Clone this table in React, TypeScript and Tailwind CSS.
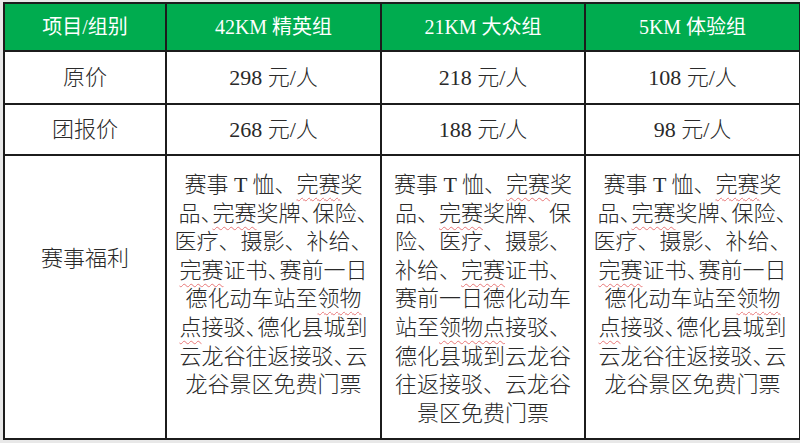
const FONT = "font-['Liberation_Serif','Noto_Sans_CJK_SC',serif]"

type Cell = { lines: string[]; squeeze?: number[] }

// [..] marks text with a spell-check squiggle
function Line({ text, squeeze }: { text: string; squeeze?: boolean }) {
  const parts = text.split(/(\[[^\]]+\])/).filter(Boolean)
  return (
    <div className="whitespace-nowrap">
      {parts.map((p, i) => {
        const marked = p.startsWith("[")
        const body = marked ? p.slice(1, -1) : p
        const chars = squeeze
          ? body.split(/(、)/).map((c, j) =>
              c === "、" ? (
                <span key={j} className="tracking-[-10px]">
                  、
                </span>
              ) : (
                c
              )
            )
          : body
        return marked ? (
          <span
            key={i}
            className="underline decoration-wavy decoration-[#e87878] decoration-1 underline-offset-[5px]"
          >
            {chars}
          </span>
        ) : (
          <span key={i}>{chars}</span>
        )
      })}
    </div>
  )
}

const wide: Cell = {
  lines: [
    "赛事 T 恤、[完赛]奖",
    "品、[完赛]奖牌、保险、",
    "医疗、摄影、补给、",
    "[完赛]证书、赛前一日",
    "德化动车站至[领物]",
    "[点]接驳、德化县城到",
    "云龙谷往返接驳、云",
    "龙谷景区免费门票",
  ],
  squeeze: [1, 3, 5, 6],
}

const narrow: Cell = {
  lines: [
    "赛事 T 恤、[完赛]奖",
    "品、[完赛]奖牌、保",
    "险、医疗、摄影、",
    "补给、[完赛]证书、",
    "赛前一日德化动车",
    "站至[领物点]接驳、",
    "德化县城到云龙谷",
    "往返接驳、云龙谷",
    "景区免费门票",
  ],
}

function Perks({ cell }: { cell: Cell }) {
  return (
    <td className="border-2 border-[#1c1c1c] align-top pt-[15px] text-center leading-[28.6px]">
      {cell.lines.map((l, i) => (
        <Line key={i} text={l} squeeze={cell.squeeze?.includes(i)} />
      ))}
    </td>
  )
}

export default function App() {
  const th = "border-2 border-[#1c1c1c] text-center text-[20px] font-normal text-white"
  const td = "border-2 border-[#1c1c1c] text-center text-[22px]"
  return (
    <div className={`h-[443px] w-[800px] bg-[#e8e8e8] pl-[3px] pt-[2px] ${FONT}`}>
      <table className="border-collapse bg-white text-[#2a2a2a] text-[22px] font-light table-fixed w-[796px]">
        <colgroup>
          <col className="w-[162px]" />
          <col className="w-[215px]" />
          <col className="w-[204px]" />
          <col className="w-[215px]" />
        </colgroup>
        <thead>
          <tr className="h-[48px] bg-[#00ac4f]">
            <th className={th}>项目/组别</th>
            <th className={th}>42KM 精英组</th>
            <th className={th}>21KM 大众组</th>
            <th className={th}>5KM 体验组</th>
          </tr>
        </thead>
        <tbody>
          <tr className="h-[53px]">
            <td className={td}>原价</td>
            <td className={td}>298 元/人</td>
            <td className={td}>218 元/人</td>
            <td className={td}>108 元/人</td>
          </tr>
          <tr className="h-[51px]">
            <td className={td}>团报价</td>
            <td className={td}>268 元/人</td>
            <td className={td}>188 元/人</td>
            <td className={td}>98 元/人</td>
          </tr>
          <tr className="h-[284px]">
            <td className="border-2 border-[#1c1c1c] align-top pt-[86px] text-center">赛事福利</td>
            <Perks cell={wide} />
            <Perks cell={narrow} />
            <Perks cell={wide} />
          </tr>
        </tbody>
      </table>
    </div>
  )
}
